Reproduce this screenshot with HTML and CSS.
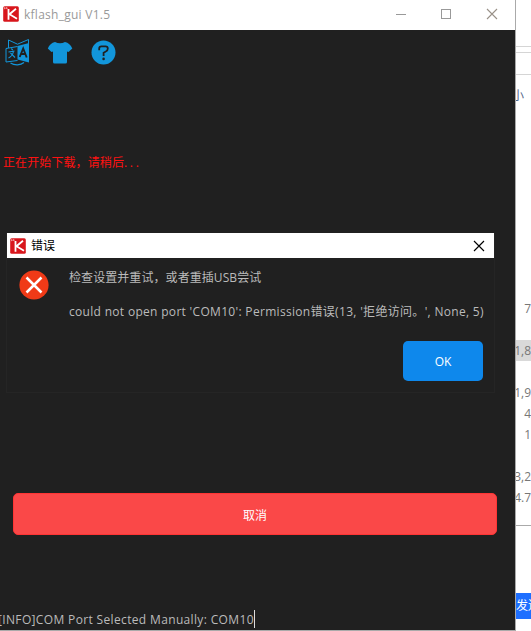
FILE: index.html
```html
<!DOCTYPE html>
<html lang="zh-CN">
<head>
<meta charset="utf-8">
<title>kflash_gui V1.5</title>
<link rel="stylesheet" href="styles.css">
</head>
<body>
<svg class="defs" width="0" height="0">
  <symbol id="logo" viewBox="0 0 16 16">
    <rect x=".2" y=".2" width="15.6" height="15.6" rx="1.5" fill="#d8161c"/>
    <path d="M5.500 3v10.800M13 2.800 6.500 8.200l7.500 4.600" fill="none" stroke="#fff" stroke-width="1.800"/>
    <path d="M1 2.200h4M1.500 1.200v2M3.500 1v2" stroke="#f5a5a5" stroke-width=".7"/>
  </symbol>
</svg>
<main class="window">
  <header class="titlebar">
    <svg class="logo"><use href="#logo"/></svg>
    <h1 class="title">kflash_gui V1.5</h1>
    <svg class="controls" width="104" height="30" fill="none">
      <path d="M0 14.500h10" stroke="#999"/>
      <rect x="45.500" y="9.500" width="9" height="9" stroke="#999"/>
      <path d="m91 9 10 10M101 9 91 19" stroke="#999188" stroke-width="1.100"/>
    </svg>
  </header>
  <nav class="toolbar">
    <svg width="26" height="28" viewBox="0 0 26 28" fill="none" stroke="#1296db">
      <path d="M12.500 8.500 1 10.500v13.500l11.500-1.500" stroke-width="1"/>
      <path d="M3.500 10V2l9 4.200L23.500 1.500v5" stroke-width="1"/>
      <path d="m12.500 8 11.500-3v19.500l-11.500-3z" fill="#1296db" stroke="none"/>
      <path d="m14.700 19 3.500-8.500 3.500 9M16 16h4.500" stroke="#202020" stroke-width="1.900"/>
      <path d="m6.300 10.500 1.500 1.500M3.500 14l6-1M8.500 13.500Q7.500 18 3.500 20M5.500 15l4.500 4.500" stroke-width="1.100"/>
      <path d="M5.500 25c4 2.500 10 2.500 13.500-.5" stroke-width="1.200"/>
    </svg>
    <svg width="26" height="28" viewBox="0 0 26 28">
      <path d="M8 4q5 2.700 10 0 5 1 7.300 6.500L21.500 14l-1.500-.6V24q0 1.500-1.500 1.500h-11Q6 25.500 6 24V13.400L4.500 14 .8 10.500Q3 5 8 4z" fill="#1296db"/>
    </svg>
    <svg width="26" height="28" viewBox="0 0 26 28">
      <circle cx="13.500" cy="14.500" r="12" fill="#1296db"/>
      <path d="M9.200 12.200V10.500Q9.200 8.300 11.500 8.300h4q2.300 0 2.300 2.200t-2 3l-2.200 1.200v3.300" fill="none" stroke="#202020" stroke-width="1.800"/>
      <circle cx="13.600" cy="20.900" r="1.300" fill="#202020"/>
    </svg>
  </nav>
  <p class="progress">正在开始下载，请稍后<span class="dots">...</span></p>
  <button class="cancel">取消</button>
  <footer class="status"><span>[INFO]COM Port Selected Manually: COM10</span><i class="caret"></i></footer>

  <section class="dialog">
    <header class="dialog-head">
      <svg class="logo"><use href="#logo"/></svg>
      <h2 class="dialog-title">错误</h2>
      <svg class="close" width="12" height="12"><path d="m1 1 10 10M11 1 1 11" stroke="#000" stroke-width="1.150"/></svg>
    </header>
    <div class="dialog-body">
      <svg class="error" width="30" height="30"><circle cx="15" cy="15" r="14.600" fill="#f03a17"/><path d="m7.500 7.500 15 15M22.500 7.500l-15 15" stroke="#fff" stroke-width="2.500"/></svg>
      <div class="message">
        <p><span class="line-one">检查设置并重试，或者重插USB尝试</span></p>
        <p><span class="line-two">could not open port 'COM10': Permission错误(13, '拒绝访问。', None, 5)</span></p>
      </div>
    </div>
    <div class="actions"><button class="ok">OK</button></div>
  </section>
</main>
<aside class="behind">
  <div class="rule first"></div>
  <div class="rule second"></div>
  <div class="rule third"></div>
  <div class="label">小</div>
  <div class="values">
    <div>7</div>
    <div class="gap"></div>
    <div class="selected">1,8</div>
    <div class="gap"></div>
    <div>1,9</div>
    <div>4</div>
    <div>1</div>
    <div class="gap"></div>
    <div>3,2</div>
    <div>4.7</div>
  </div>
  <div class="send">发送</div>
</aside>
</body>
</html>
```

FILE: styles.css
```css
* { box-sizing: border-box; }
body {
  margin: 0;
  width: 531px;
  height: 631px;
  display: flex;
  overflow: hidden;
  background: #fff;
  font: 12px/16px "Open Sans", "Noto Sans CJK SC", sans-serif;
}
h1, h2, p { margin: 0; font-size: 12px; font-weight: 400; }
button { border: 0; padding: 0; color: #fff; font: inherit; }
svg { display: block; flex: none; }
.defs { position: absolute; }
.window {
  position: relative;
  width: 516px;
  height: 631px;
  flex: none;
  display: flex;
  flex-direction: column;
  overflow: hidden;
  background: #202020;
  border-right: 1px solid #aaa;
  border-bottom: 1px solid #aaa;
}
.titlebar {
  height: 30px;
  flex: none;
  display: flex;
  align-items: center;
  padding: 0 15px 0 3px;
  background: #fff;
}
.logo { width: 16px; height: 16px; }
.titlebar .logo { margin-top: -2px; }
.title { margin-left: 5px; color: #999; white-space: nowrap; letter-spacing: .26px; }
.controls { margin-left: auto; }
.toolbar { display: flex; gap: 17px; padding: 8px 0 0 5px; height: 36px; }
.toolbar svg + svg { position: relative; left: -1px; }
.progress {
  margin: 89px 0 0 3px;
  height: 16px;
  color: #f11;
  white-space: nowrap;
  letter-spacing: .1px;
}
.dots { letter-spacing: 2.700px; }
.cancel {
  margin: 322px 18px 0 13px;
  height: 42px;
  flex: none;
  padding-top: 3px;
  border: 1px solid #ff3434;
  border-radius: 5px;
  background: #fa4848;
}
.status {
  display: flex;
  align-items: center;
  margin: 75px 0 0 -2px;
  height: 18px;
  color: #bbb;
  white-space: nowrap;
  letter-spacing: .35px;
}
.status span { padding-top: 2px; }
.caret { width: 1px; height: 18px; background: #ddd; }
.dialog {
  position: absolute;
  left: 6px;
  top: 233px;
  width: 489px;
  height: 160px;
  border: solid #252525;
  border-width: 0 1px 1px;
  background: #202020;
}
.dialog-head {
  display: flex;
  align-items: center;
  height: 25px;
  padding: 0 9px 0 3px;
  background: #fff;
}
.dialog-title { margin-left: 5px; color: #000; }
.close { margin-left: auto; }
.dialog-body { display: flex; padding: 12px 0 0 12px; height: 83px; color: #bbb; }
.message { margin: 0 0 0 20px; white-space: nowrap; }
.message p { height: 34px; }
.line-one { letter-spacing: .07px; }
.line-two { letter-spacing: .31px; }
.actions { display: flex; justify-content: flex-end; padding-right: 11px; }
.ok { width: 80px; height: 40px; padding-top: 1px; border-radius: 5px; background: #0e88ec; }
.behind { width: 15px; height: 631px; overflow: hidden; color: #777; }
.rule { height: 1px; background: #d5d5d5; }
.first { margin-top: 46px; }
.second { margin-top: 5px; }
.third { margin-top: 21px; }
.label { margin: 13px 0 0 -4px; height: 16px; width: 20px; color: #568; }
.values {
  display: flex;
  flex-direction: column;
  align-items: flex-end;
  height: 422px;
  padding-top: 194px;
  border-bottom: 1px solid #aaa;
  line-height: 21px;
}
.values div { flex: none; height: 21px; min-width: 15px; text-align: right; white-space: nowrap; }
.values .selected { background: #d9d9d9; }
.send { margin-top: 67px; height: 26px; line-height: 26px; background: #1e6fff; color: #fff; white-space: nowrap; }
```
